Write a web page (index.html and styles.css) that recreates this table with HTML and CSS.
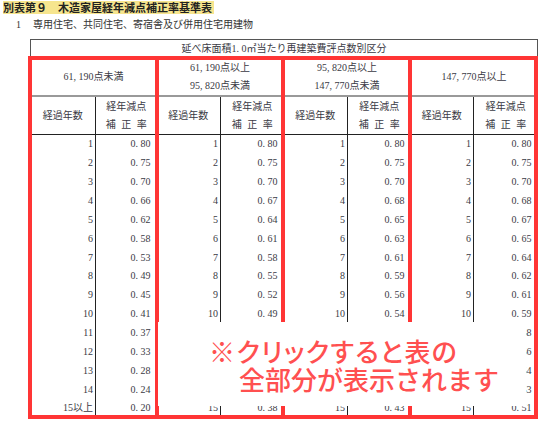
FILE: index.html
```html
<!DOCTYPE html>
<html lang="ja">
<head>
<meta charset="utf-8">
<title>別表第９ 木造家屋経年減点補正率基準表</title>
<link rel="stylesheet" href="styles.css">
</head>
<body>
<div class="page">
  <h1 class="title"><span class="hl">別表第９　木造家屋経年減点補正率基準表</span></h1>
  <p class="sub"><span class="sub-num">1</span>専用住宅、共同住宅、寄宿舎及び併用住宅用建物</p>
  <div class="table-wrap">
    <table class="rate-table">
      <colgroup>
        <col class="c1"><col class="c2"><col class="c3"><col class="c4"><col class="c5"><col class="c6"><col class="c7"><col class="c8">
      </colgroup>
      <tr class="row-a"><td colspan="8">延べ床面積1. 0㎡当たり再建築費評点数別区分</td></tr>
      <tr class="row-b">
        <td colspan="2">61, 190点未満</td>
        <td colspan="2">61, 190点以上<br>95, 820点未満</td>
        <td colspan="2">95, 820点以上<br>147, 770点未満</td>
        <td colspan="2">147, 770点以上</td>
      </tr>
      <tr class="row-c">
        <td class="y">経過年数</td><td class="r">経年減点<br><span class="spaced">補 正 率</span></td>
        <td class="y">経過年数</td><td class="r">経年減点<br><span class="spaced">補 正 率</span></td>
        <td class="y">経過年数</td><td class="r">経年減点<br><span class="spaced">補 正 率</span></td>
        <td class="y">経過年数</td><td class="r">経年減点<br><span class="spaced">補 正 率</span></td>
      </tr>
      <tr class="d"><td class="y">1</td><td class="r">0. 80</td><td class="y">1</td><td class="r">0. 80</td><td class="y">1</td><td class="r">0. 80</td><td class="y">1</td><td class="r">0. 80</td></tr>
      <tr class="d"><td class="y">2</td><td class="r">0. 75</td><td class="y">2</td><td class="r">0. 75</td><td class="y">2</td><td class="r">0. 75</td><td class="y">2</td><td class="r">0. 75</td></tr>
      <tr class="d"><td class="y">3</td><td class="r">0. 70</td><td class="y">3</td><td class="r">0. 70</td><td class="y">3</td><td class="r">0. 70</td><td class="y">3</td><td class="r">0. 70</td></tr>
      <tr class="d"><td class="y">4</td><td class="r">0. 66</td><td class="y">4</td><td class="r">0. 67</td><td class="y">4</td><td class="r">0. 68</td><td class="y">4</td><td class="r">0. 68</td></tr>
      <tr class="d"><td class="y">5</td><td class="r">0. 62</td><td class="y">5</td><td class="r">0. 64</td><td class="y">5</td><td class="r">0. 65</td><td class="y">5</td><td class="r">0. 67</td></tr>
      <tr class="d"><td class="y">6</td><td class="r">0. 58</td><td class="y">6</td><td class="r">0. 61</td><td class="y">6</td><td class="r">0. 63</td><td class="y">6</td><td class="r">0. 65</td></tr>
      <tr class="d"><td class="y">7</td><td class="r">0. 53</td><td class="y">7</td><td class="r">0. 58</td><td class="y">7</td><td class="r">0. 61</td><td class="y">7</td><td class="r">0. 64</td></tr>
      <tr class="d"><td class="y">8</td><td class="r">0. 49</td><td class="y">8</td><td class="r">0. 55</td><td class="y">8</td><td class="r">0. 59</td><td class="y">8</td><td class="r">0. 62</td></tr>
      <tr class="d"><td class="y">9</td><td class="r">0. 45</td><td class="y">9</td><td class="r">0. 52</td><td class="y">9</td><td class="r">0. 56</td><td class="y">9</td><td class="r">0. 61</td></tr>
      <tr class="d"><td class="y">10</td><td class="r">0. 41</td><td class="y">10</td><td class="r">0. 49</td><td class="y">10</td><td class="r">0. 54</td><td class="y">10</td><td class="r">0. 59</td></tr>
      <tr class="d"><td class="y">11</td><td class="r">0. 37</td><td class="y">11</td><td class="r">0. 47</td><td class="y">11</td><td class="r">0. 52</td><td class="y">11</td><td class="r">0. 58</td></tr>
      <tr class="d"><td class="y">12</td><td class="r">0. 33</td><td class="y">12</td><td class="r">0. 45</td><td class="y">12</td><td class="r">0. 50</td><td class="y">12</td><td class="r">0. 56</td></tr>
      <tr class="d"><td class="y">13</td><td class="r">0. 28</td><td class="y">13</td><td class="r">0. 42</td><td class="y">13</td><td class="r">0. 48</td><td class="y">13</td><td class="r">0. 54</td></tr>
      <tr class="d"><td class="y">14</td><td class="r">0. 24</td><td class="y">14</td><td class="r">0. 40</td><td class="y">14</td><td class="r">0. 46</td><td class="y">14</td><td class="r">0. 53</td></tr>
      <tr class="d"><td class="y">15以上</td><td class="r">0. 20</td><td class="y">15</td><td class="r">0. 38</td><td class="y">15</td><td class="r">0. 43</td><td class="y">15</td><td class="r">0. 51</td></tr>
    </table>
    <div class="red-grid">
      <div class="red-col first"></div>
      <div class="red-col"></div>
      <div class="red-col"></div>
      <div class="red-col"></div>
    </div>
    <div class="notice">
      <span class="notice-l1">※クリックすると表の</span>
      <span class="notice-l2">全部分が表示されます</span>
    </div>
  </div>
</div>
</body>
</html>
```
FILE: styles.css
```css
html, body {
  margin: 0;
  padding: 0;
  background: #ffffff;
}

.page {
  width: 550px;
  height: 422px;
  overflow: hidden;
  font-family: "Liberation Serif", "Noto Sans CJK JP", serif;
  color: #333;
}

.title {
  margin: 0;
  padding: 0 0 0 3px;
  height: 14px;
  font-family: "Noto Sans CJK JP", sans-serif;
  font-size: 11px;
  font-weight: 700;
  line-height: 14px;
}

.hl {
  display: inline-block;
  height: 13px;
  line-height: 13px;
  background: #f6e58e;
  color: #222;
  padding-right: 2px;
}

.sub {
  margin: 5px 0 0 0;
  height: 12px;
  font-family: "Liberation Serif", "Noto Sans CJK JP", serif;
  font-size: 10px;
  line-height: 12px;
  display: flex;
  color: #333;
}

.sub-num {
  width: 33px;
  padding-left: 16px;
  box-sizing: border-box;
}

.table-wrap {
  position: relative;
  margin: 8px 0 0 30px;
  width: 507px;
}

.rate-table {
  border-collapse: collapse;
  table-layout: fixed;
  width: 507px;
  font-size: 10px;
  color: #3a3a44;
}

.c1 { width: 65px; }
.c2 { width: 61px; }
.c3 { width: 64px; }
.c4 { width: 63px; }
.c5 { width: 64px; }
.c6 { width: 63px; }
.c7 { width: 63px; }
.c8 { width: 64px; }

.rate-table td {
  padding: 0;
  white-space: nowrap;
}

.row-a td {
  height: 18px;
  border: 1px solid #555;
  text-align: center;
  line-height: 18px;
}

.row-b td {
  height: 36px;
  text-align: center;
  line-height: 18px;
  border-bottom: 2px solid #999;
}

.row-c td {
  height: 37px;
  line-height: 18px;
  text-align: center;
  border-bottom: 1px solid #222;
}

.row-c td.y {
  border-right: 1px solid #222;
}

.spaced {
  word-spacing: 3px;
}

.d td {
  height: 18.87px;
  line-height: 12px;
  text-align: right;
}

.d td.y {
  padding-right: 2px;
  border-right: 1px solid #222;
}

.d td.r {
  padding-right: 6px;
}

.red-grid {
  position: absolute;
  left: -2px;
  top: 17px;
  width: 510px;
  height: 363px;
  box-sizing: border-box;
  border: 4px solid #ff3535;
  display: flex;
}

.red-col {
  width: 127px;
  border-left: 4px solid #ff3535;
  box-sizing: border-box;
}

.red-col.first {
  width: 123px;
  border-left: 0;
}

.notice {
  position: absolute;
  left: 128px;
  top: 283px;
  width: 368px;
  height: 84px;
  background: #ffffff;
  box-sizing: border-box;
  padding-top: 15px;
  display: flex;
  flex-direction: column;
  font-family: "Noto Sans CJK JP", sans-serif;
  font-size: 26px;
  font-weight: 500;
  line-height: 28px;
  color: #ff5050;
}

.notice-l1 {
  padding-left: 51px;
  font-feature-settings: "palt";
  letter-spacing: 1.4px;
}

.notice-l2 {
  padding-left: 81px;
}
```
